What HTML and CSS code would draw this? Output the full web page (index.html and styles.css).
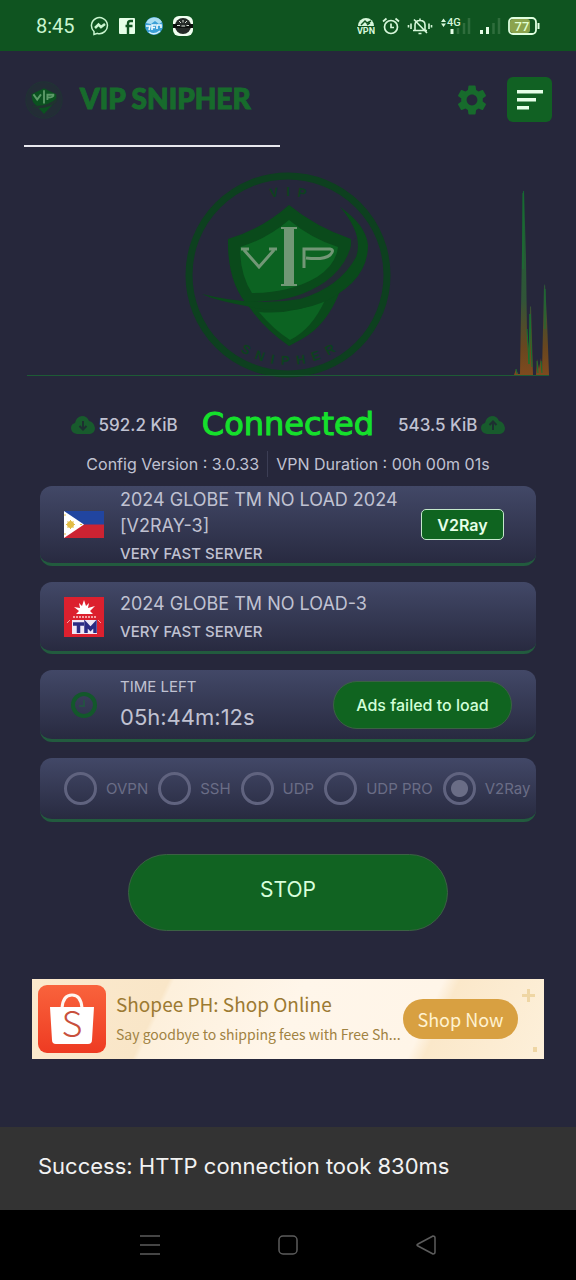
FILE: index.html
```html
<!DOCTYPE html>
<html lang="en">
<head>
    <meta charset="UTF-8">
    <meta name="viewport" content="width=device-width, initial-scale=1.0">
    <title>VIP Snipher</title>
    <link rel="stylesheet" href="styles.css">
</head>
<body>
    <div class="status-bar">
        <div class="status-left">
            <span class="clock">8:45</span>
            <!-- messenger -->
            <svg width="20" height="20" viewBox="0 0 20 20" fill="none" stroke="#c9f5cf" stroke-width="1.5">
                <path d="M4 17.500V15.500A8 8 0 1 1 7.500 17.400L4 18.500Z"/>
                <path d="M5 12L8.500 8.500L11 11L15 8" stroke-width="2.500"/>
            </svg>
            <!-- facebook -->
            <svg width="16" height="16" viewBox="0 0 16 16">
                <rect width="16" height="16" rx="1" fill="#e6ffe8"/>
                <path d="M9 16V5.500Q9 3 11.500 3H14M6.500 8H13.500" fill="none" stroke="#0f5420" stroke-width="2.400"/>
            </svg>
            <!-- vpn apps -->
            <svg width="20" height="20" viewBox="0 0 20 20">
                <circle cx="10" cy="10" r="9" fill="#3a9fd6"/>
                <path d="M2 7A9 9 0 0 1 18 6L15 8L11 5L7 8Z" fill="#a9ddf2"/>
                <path d="M2 10H6L5 14M8 14V9H12M8 11.500H11M13 13V9H17V12" fill="none" stroke="#f0fbff" stroke-width="1.600"/>
                <path d="M5 16Q10 20 16 15" fill="none" stroke="#d5f0fa" stroke-width="1.500"/>
            </svg>
            <svg width="20" height="20" viewBox="0 0 20 20">
                <rect width="20" height="20" rx="6" fill="#f1fff1"/>
                <circle cx="10" cy="10" r="8" fill="#242a27"/>
                <path d="M0 8H5L7 11H13L15 8H20V12H0Z" fill="#0c110e"/>
                <path d="M4 9.500H7M8.500 10H12M13.500 9.500H16M6 5L8 7M10 4V6.500M14 5L12 7" stroke="#d7e0d8" stroke-width="1"/>
            </svg>
        </div>
        <div class="status-right">
            <svg width="18" height="18" viewBox="0 0 18 18">
                <path d="M1 9A8 8 0 0 1 17 9Z" fill="#d6f7da"/>
                <path d="M4 8L8 4L10 6L14 4M10 8L13 6" stroke="#0f5420" stroke-width="1.500" fill="none"/>
                <text x="9" y="17" text-anchor="middle" class="vpn-text">VPN</text>
            </svg>
            <svg width="18" height="18" viewBox="0 0 18 18" fill="none" stroke="#d6f7da" stroke-width="1.700">
                <circle cx="9" cy="10" r="6.500"/>
                <path d="M9 6.500V10.500H12M1 4.500L4.500 1.500M17 4.500L13.500 1.500"/>
            </svg>
            <svg width="26" height="18" viewBox="0 0 26 18" fill="none" stroke="#d6f7da" stroke-width="1.600">
                <path d="M8 13.500V8Q8 3.500 13 3.500T18 8V13.500ZM6 13.500H20M13 1.500V3.500M11.500 16.500H14.500M7 2.500L20 16M4 6.500V12M1.500 8V10.500M22 6.500V12M24.500 8V10.500"/>
            </svg>
            <svg width="32" height="18" viewBox="0 0 32 18">
                <path d="M1 5L3.500 1.500L6 5ZM1 6.500H6L3.500 10Z" fill="#d6f7da"/>
                <path d="M12 12V17" stroke="#e6ffe8" stroke-width="3"/>
                <path d="M18 11V17M24 6V17M29 1V17" stroke="#2f6d3c" stroke-width="2.500"/>
                <text x="7" y="9" class="signal-text">4G</text>
            </svg>
            <svg width="22" height="18" viewBox="0 0 22 18">
                <path d="M2.500 13V17M8.500 10V17" stroke="#e6ffe8" stroke-width="3"/>
                <path d="M14.500 6V17M20 1V17" stroke="#2f6d3c" stroke-width="2.500"/>
            </svg>
            <svg width="32" height="18" viewBox="0 0 32 18">
                <rect x="1" y="1" width="27" height="16" rx="4" fill="#0f5420" stroke="#e0ffe0" stroke-width="1.800"/>
                <rect x="2" y="2" width="20" height="14" rx="3" fill="#8ba34d"/>
                <path d="M30.500 6V12" stroke="#e0ffe0" stroke-width="2"/>
                <text x="14" y="14" text-anchor="middle" class="battery-text">77</text>
            </svg>
        </div>
    </div>

    <header class="app-header">
        <svg class="brand-icon" width="40" height="40" viewBox="0 0 212 212">
            <circle cx="106" cy="106" r="96" fill="#232d36" stroke="#213235" stroke-width="6"/>
            <path d="M106 44L172 76Q172 120 150 132L106 180L62 132Q40 120 40 76Z" fill="#0b5220"/>
            <path d="M42 134Q120 148 180 92L172 118Q120 158 50 146Z" fill="#20332f"/>
            <path d="M50 76L70 104L90 76M106 54V124M124 106V78H156Q160 92 126 93" fill="none" stroke="#5c9a68" stroke-width="10"/>
        </svg>
        <h1 class="brand">VIP SNIPHER</h1>
        <button class="icon-button" aria-label="Settings">
            <svg width="36" height="36" viewBox="0 0 24 24" fill="#176b2c">
                <path d="M19.140 12.940c.04-.3.06-.61.06-.94 0-.32-.02-.64-.07-.94l2.030-1.580c.18-.14.23-.41.12-.61l-1.920-3.320c-.12-.22-.37-.29-.59-.22l-2.390.96c-.5-.38-1.030-.7-1.620-.94l-.36-2.540c-.04-.24-.24-.41-.48-.41h-3.840c-.24 0-.43.17-.47.41l-.36 2.540c-.59.24-1.130.57-1.620.94l-2.390-.96c-.22-.08-.47 0-.59.22L2.740 8.870c-.12.21-.08.47.12.61l2.030 1.580c-.05.3-.09.63-.09.94s.02.64.07.94l-2.030 1.580c-.18.14-.23.41-.12.61l1.920 3.320c.12.22.37.29.59.22l2.390-.96c.5.38 1.030.7 1.620.94l.36 2.540c.05.24.24.41.48.41h3.840c.24 0 .44-.17.47-.41l.36-2.540c.59-.24 1.130-.56 1.620-.94l2.390.96c.22.08.47 0 .59-.22l1.920-3.320c.12-.22.07-.47-.12-.61l-2.010-1.580zM12 15.600c-1.980 0-3.600-1.620-3.600-3.600s1.620-3.600 3.600-3.600 3.600 1.620 3.600 3.600-1.620 3.600-3.600 3.600z"/>
            </svg>
        </button>
        <button class="menu-button" aria-label="Menu">
            <svg width="26" height="20" viewBox="0 0 26 20" fill="#e6ffe8">
                <path d="M0 0H26V3.500H0ZM0 8H19V11.500H0ZM0 16H12V19.500H0Z"/>
            </svg>
        </button>
    </header>
    <div class="tab-line"></div>

    <main>
        <div class="hero">
            <svg class="hero-logo" width="212" height="212" viewBox="0 0 212 212">
                <defs>
                    <path id="arc-top" d="M27 106A79 79 0 0 1 185 106"/>
                    <path id="arc-bottom" d="M16 106A90 90 0 0 0 196 106"/>
                </defs>
                <circle cx="106" cy="106" r="99" fill="none" stroke="#0d401f" stroke-width="7"/>
                <!-- shield -->
                <path d="M107 36Q134 58 169 70Q171 98 158 122Q145 156 120 170L107 177Q82 160 68 139Q45 115 46 70Q80 60 107 36Z" fill="#0a4a1b"/>
                <path d="M107 51Q130 70 156 78Q154 96 135 108Q108 124 70 124Q58 106 58 78Q85 70 107 51Z" fill="#0c6322"/>
                <path d="M77 143Q112 146 143 131Q130 160 108 171Q91 160 77 143Z" fill="#0c6322"/>
                <!-- swoosh -->
                <path d="M72 132Q112 134 143 113Q166 96 170 72L178 66Q178 96 152 116Q120 138 72 132Z" fill="#232b35"/>
                <path d="M20 125Q72 138 118 130Q158 118 174 88Q182 66 158 38Q184 56 186 76Q186 98 170 114Q130 152 64 137Q32 131 20 125Z" fill="#0a4a1b"/>
                <g fill="none" stroke="#729776">
                    <path d="M62 81L77 98L92 81M59 80H67M87 80H95" stroke-width="3"/>
                    <path d="M122 99V80H148Q153 81 148 86Q142 91 124 89" stroke-width="3"/>
                    <path d="M107 60V116" stroke-width="10"/>
                    <path d="M99 59H115M99 116H115" stroke-width="2"/>
                </g>
                <text class="arc-text"><textPath href="#arc-top" startOffset="50%" text-anchor="middle">V&nbsp; I&nbsp; P</textPath></text>
                <text class="arc-text"><textPath href="#arc-bottom" startOffset="50%" text-anchor="middle">S&nbsp; N&nbsp; I&nbsp; P&nbsp; H&nbsp; E&nbsp; R</textPath></text>
            </svg>
            <div class="traffic">
                <svg width="35" height="186" viewBox="0 0 35 186">
                    <defs>
                        <linearGradient id="spike" gradientUnits="userSpaceOnUse" x1="0" y1="0" x2="0" y2="186">
                            <stop offset="0" stop-color="#156632"/>
                            <stop offset="0.600" stop-color="#315438"/>
                            <stop offset="0.850" stop-color="#68461f"/>
                            <stop offset="1" stop-color="#7e4a1e"/>
                        </linearGradient>
                    </defs>
                    <path d="M0 186L2 180L4 185H6L8 60L9 2L10 2L12 70L13 146L15 160L16 118L17 117L19 186H22L23 170L25 180L27 169L28 183L30 97L31 95L33 130L35 186Z" fill="url(#spike)"/>
                    <path d="M13 140L15 175L16 125L18 178M2 180L3 185M23 172L24 184M27 172L28 184M9 4V80M31 100V140" fill="none" stroke="#167330"/>
                </svg>
            </div>
        </div>

        <div class="stats">
            <svg width="24" height="20" viewBox="0 0 24 20">
                <path d="M6 19Q0 18 0 13Q0 9 4 8Q5 2 11 1Q16 1 18 6Q23 7 24 13Q24 18 19 19Z" fill="#185b2d"/>
                <path d="M12 6V14M8.500 11L12 14.500L15.500 11" fill="none" stroke="#1d2f31" stroke-width="2"/>
            </svg>
            <span class="stat-value">592.2 KiB</span>
            <span class="state">Connected</span>
            <span class="stat-value">543.5 KiB</span>
            <svg width="24" height="20" viewBox="0 0 24 20">
                <path d="M6 19Q0 18 0 13Q0 9 4 8Q5 2 11 1Q16 1 18 6Q23 7 24 13Q24 18 19 19Z" fill="#185b2d"/>
                <path d="M12 15V7M8.500 10L12 6.500L15.500 10" fill="none" stroke="#1d2f31" stroke-width="2"/>
            </svg>
        </div>
        <div class="info">
            <span>Config Version : 3.0.33</span>
            <span class="info-right">VPN Duration : 00h 00m 01s</span>
        </div>

        <div class="cards">
            <div class="card card-server">
                <svg class="card-icon" width="40" height="27" viewBox="0 0 40 27">
                    <rect width="40" height="14" fill="#2145a0"/>
                    <rect y="13.500" width="40" height="13.500" fill="#cc2332"/>
                    <path d="M0 0L20 13.500L0 27Z" fill="#fff"/>
                    <circle cx="6.500" cy="13.500" r="3.500" fill="#e2bc45"/>
                    <path d="M6.500 9V18M2 13.500H11M3.500 10.500L9.500 16.500M9.500 10.500L3.500 16.500" stroke="#e2bc45" stroke-width="1"/>
                    <path d="M1 3V5M1 22V24M16 13.500H18" stroke="#e2bc45" stroke-width="1"/>
                </svg>
                <div class="card-text">
                    <div class="card-title">2024 GLOBE TM NO LOAD 2024 [V2RAY-3]</div>
                    <div class="card-sub">VERY FAST SERVER</div>
                </div>
                <button class="tag">V2Ray</button>
            </div>

            <div class="card">
                <svg class="card-icon" width="40" height="40" viewBox="0 0 40 40">
                    <rect width="40" height="40" fill="#dc202e"/>
                    <path d="M12 17L15 14L10 10L16 11L15 6L18 9L20 3L22 9L25 6L24 11L31 9L26 14L29 17Z" fill="#fff"/>
                    <path d="M9 20H32" stroke="#f3a2a5" stroke-width="2" stroke-dasharray="2 1"/>
                    <path d="M3 26L6 23M37 26L34 23" stroke="#f3a2a5"/>
                    <rect x="8" y="23" width="25" height="14" fill="#eee7f5"/>
                    <path d="M9 27H20M14.500 27V36M22 36V27L26.500 32L31 27V36" fill="none" stroke="#2b2b83" stroke-width="3.500"/>
                </svg>
                <div class="card-text">
                    <div class="card-title">2024 GLOBE TM NO LOAD-3</div>
                    <div class="card-sub">VERY FAST SERVER</div>
                </div>
            </div>

            <div class="card">
                <svg class="card-icon" width="40" height="28" viewBox="0 0 40 28">
                    <circle cx="20" cy="14" r="11" fill="none" stroke="#13582b" stroke-width="4"/>
                    <path d="M20 9V15H15" fill="none" stroke="#255044" stroke-width="2"/>
                </svg>
                <div class="card-text">
                    <div class="time-label">TIME LEFT</div>
                    <div class="time-value">05h:44m:12s</div>
                </div>
                <button class="ads-button">Ads failed to load</button>
            </div>

            <div class="card card-modes">
                <label class="mode"><input type="radio" name="mode" disabled>OVPN</label>
                <label class="mode"><input type="radio" name="mode" disabled>SSH</label>
                <label class="mode"><input type="radio" name="mode" disabled>UDP</label>
                <label class="mode"><input type="radio" name="mode" disabled>UDP PRO</label>
                <label class="mode"><input type="radio" name="mode" checked disabled>V2Ray</label>
            </div>
        </div>

        <button class="stop-button">STOP</button>

        <div class="ad">
            <svg class="ad-logo" width="68" height="68" viewBox="0 0 68 68">
                <defs>
                    <linearGradient id="shop" x1="0" y1="0" x2="0" y2="1">
                        <stop offset="0" stop-color="#f9633c"/>
                        <stop offset="1" stop-color="#ee3b22"/>
                    </linearGradient>
                </defs>
                <rect width="68" height="68" rx="9" fill="url(#shop)"/>
                <path d="M24 23Q25 10 34 10T44 23" fill="none" stroke="#fff6f0" stroke-width="3"/>
                <path d="M12 22H56L54 55Q54 59 50 59H18Q14 59 14 55Z" fill="#fff"/>
                <text x="34" y="52" text-anchor="middle" class="shop-letter">S</text>
            </svg>
            <div class="ad-text">
                <div class="ad-title">Shopee PH: Shop Online</div>
                <div class="ad-sub">Say goodbye to shipping fees with Free Sh...</div>
            </div>
            <button class="ad-button">Shop Now</button>
            <svg class="ad-marks" width="16" height="64" viewBox="0 0 16 64" fill="#efd6a4">
                <path d="M5 0H8V5H13V8H8V13H5V8H0V5H5ZM11 58H15V63H11Z"/>
            </svg>
        </div>
    </main>

    <div class="toast">Success: HTTP connection took 830ms</div>

    <nav class="nav-bar">
        <button class="icon-button" aria-label="Recent apps">
            <svg width="20" height="20" viewBox="0 0 20 20" fill="none" stroke="#5c5c5c" stroke-width="1.500">
                <path d="M0 1H20M0 10H20M0 19H20"/>
            </svg>
        </button>
        <button class="icon-button" aria-label="Home">
            <svg width="20" height="20" viewBox="0 0 20 20" fill="none" stroke="#5c5c5c" stroke-width="1.500">
                <rect x="1" y="1" width="18" height="18" rx="4"/>
            </svg>
        </button>
        <button class="icon-button" aria-label="Back">
            <svg width="20" height="20" viewBox="0 0 20 20" fill="none" stroke="#5c5c5c" stroke-width="1.500" stroke-linejoin="round">
                <path d="M17 1Q19 1 19 3V17Q19 19 17 19L2 11Q0 10 2 9Z"/>
            </svg>
        </button>
    </nav>
</body>
</html>
```

FILE: styles.css
```css
* {
    margin: 0;
    padding: 0;
    box-sizing: border-box;
}

body {
    font-family: Inter, 'Liberation Sans', sans-serif;
    background: #26273b;
    color: #c0c2d2;
    min-height: 100vh;
    display: flex;
    flex-direction: column;
}

button {
    font-family: inherit;
    border: none;
    background: none;
    cursor: pointer;
}

svg {
    display: block;
    flex-shrink: 0;
}

/* status bar */
.status-bar {
    display: flex;
    justify-content: space-between;
    align-items: center;
    height: 51px;
    padding: 0 36px;
    background: #0f5420;
}

.status-left {
    display: flex;
    align-items: center;
    gap: 9px;
}

.status-right {
    display: flex;
    align-items: center;
    gap: 7px;
}

.clock {
    font-family: Roboto, sans-serif;
    font-size: 20px;
    color: #c9f5cf;
    margin-right: 6px;
}

.vpn-text {
    font: 700 9px Roboto, sans-serif;
    fill: #d6f7da;
}

.signal-text {
    font: 500 11px Roboto, sans-serif;
    fill: #d6f7da;
}

.battery-text {
    font: 500 13px Roboto, sans-serif;
    fill: #e0ffd0;
}

/* header */
.app-header {
    display: flex;
    align-items: center;
    padding: 26px 24px 0;
}

.brand {
    flex: 1;
    margin-left: 16px;
    font-family: Lato, sans-serif;
    font-size: 28px;
    font-weight: 900;
    line-height: 40px;
    padding-bottom: 4px;
    color: #176b2c;
    -webkit-text-stroke: 1px #176b2c;
}

.menu-button {
    display: flex;
    align-items: center;
    justify-content: center;
    width: 45px;
    height: 45px;
    margin-left: 17px;
    border-radius: 6px;
    background: #116123;
}

.tab-line {
    width: 256px;
    height: 2px;
    margin: 23px 24px 0;
    background: #e8e8ee;
}

main {
    flex: 1;
}

/* logo with the traffic graph over it */
.hero {
    display: grid;
    margin: 22px 27px 0;
}

.hero-logo {
    grid-area: 1 / 1;
    justify-self: center;
}

.arc-text {
    font: 700 13px 'Liberation Sans', sans-serif;
    fill: #0d401f;
}

.traffic {
    grid-area: 1 / 1;
    align-self: end;
    display: flex;
    justify-content: flex-end;
    margin-bottom: 5px;
    border-bottom: 1px solid #1d5b35;
}

.stats {
    display: flex;
    justify-content: center;
    align-items: center;
    gap: 4px;
    height: 40px;
    margin-top: 24px;
}

.stat-value {
    font-size: 17px;
    font-weight: 500;
}

.state {
    margin: 0 20px;
    font-family: 'DejaVu Sans', sans-serif;
    font-size: 32px;
    line-height: 36px;
    padding-bottom: 2px;
    color: #15e02c;
    -webkit-text-stroke: 1px #15e02c;
}

.info {
    display: flex;
    justify-content: center;
    font-size: 16px;
    line-height: 26px;
    margin-top: 6px;
}

.info-right {
    margin-left: 8px;
    padding-left: 8px;
    border-left: 1px solid #3c3e55;
}

/* cards */
.cards {
    display: flex;
    flex-direction: column;
    gap: 16px;
    margin: 9px 40px 0;
}

.card {
    display: flex;
    align-items: center;
    min-height: 72px;
    padding: 0 24px;
    border-bottom: 3px solid #225b3e;
    border-radius: 12px;
    background: linear-gradient(#424867, #282a40);
}

.card-server {
    min-height: 80px;
}

.card-text {
    flex: 1;
    margin-left: 16px;
    padding-bottom: 2px;
}

.card-server .card-text {
    padding-bottom: 0;
}

.card-title {
    font-size: 18px;
    line-height: 26px;
}

.card-sub {
    margin-top: 6px;
    font-size: 15px;
    font-weight: 500;
    line-height: 18px;
}

.tag {
    height: 31px;
    width: 83px;
    margin-right: 8px;
    border: 1px solid #c5e8cc;
    border-radius: 5px;
    background: #0f6420;
    color: #e6ffe8;
    font-size: 16px;
    font-weight: 600;
}

.time-label {
    font-size: 15px;
    line-height: 26px;
}

.time-value {
    font-size: 22px;
    line-height: 34px;
}

.ads-button {
    width: 179px;
    height: 48px;
    border: 1px solid #3b6144;
    border-radius: 24px;
    background: #106420;
    color: #d2ffd8;
    font-size: 16px;
    font-weight: 500;
}

.card-modes {
    min-height: 64px;
    gap: 10px;
    overflow: hidden;
}

.mode {
    display: flex;
    align-items: center;
    flex-shrink: 0;
    gap: 9px;
    font-size: 15px;
    white-space: nowrap;
    color: #6a6d86;
}

.mode input {
    appearance: none;
    width: 33px;
    height: 33px;
    border: 3px solid #60637f;
    border-radius: 50%;
}

.mode input:checked {
    background: radial-gradient(circle, #6a6d86 8px, transparent 9px);
}

.stop-button {
    display: block;
    width: 320px;
    height: 77px;
    margin: 32px auto 0;
    padding-bottom: 6px;
    border: 1px solid #3b6144;
    border-radius: 39px;
    background: #116322;
    color: #d8ffdc;
    font-size: 21px;
}

/* banner ad */
.ad {
    position: relative;
    display: flex;
    align-items: center;
    height: 80px;
    margin: 48px 32px;
    padding: 0 26px 0 6px;
    background: linear-gradient(115deg, #fbe9cd 0%, #f9e6c8 25%, #fdf0dc 26%, #fff6ea 50%, #fff5e8 75%, #fbe8ca 78%, #fdf0da 100%);
    font-family: 'Noto Sans CJK SC', 'Noto Sans', sans-serif;
}

.shop-letter {
    font: 300 36px 'Noto Sans CJK SC', sans-serif;
    fill: #c8503c;
}

.ad-text {
    flex: 1;
    margin-left: 10px;
    white-space: nowrap;
}

.ad-title {
    font-size: 19px;
    line-height: 30px;
    color: #9c7a32;
}

.ad-sub {
    font-size: 14px;
    line-height: 30px;
    color: #a08242;
}

.ad-button {
    width: 115px;
    height: 40px;
    border-radius: 20px;
    background: #d8a041;
    color: #fff2d0;
    font-family: inherit;
    font-size: 18px;
}

.ad-marks {
    position: absolute;
    top: 10px;
    right: 6px;
}

.toast {
    padding: 22px 38px 27px;
    background: #333;
    color: #f2f2f2;
    font-size: 22px;
    line-height: 34px;
}

.nav-bar {
    display: flex;
    justify-content: center;
    align-items: center;
    gap: 118px;
    height: 70px;
    background: #000;
}
```
